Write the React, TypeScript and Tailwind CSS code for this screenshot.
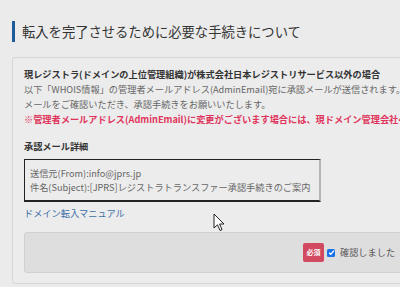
import React from "react";

const jp = { fontFamily: '"Noto Sans CJK JP", "Noto Sans", sans-serif' };

function Cursor() {
  return (
    <svg
      className="absolute left-[213px] top-[213px]"
      width="12"
      height="19"
      viewBox="0 0 12 19"
    >
      <path
        d="M1 1 L1 15 L4.5 11.8 L7 17.5 L9 16.6 L6.6 11 L11 11 Z"
        fill="#fff"
        stroke="#222"
        strokeWidth="1"
        strokeLinejoin="round"
      />
    </svg>
  );
}

export default function App() {
  return (
    <div
      className="relative w-[400px] h-[287px] overflow-hidden bg-[#ebebeb] text-[#555]"
      style={jp}
    >
      {/* Page heading */}
      <div className="mt-[21px] ml-[12px] flex items-center h-[21px] border-l-[3px] border-[#1d5c9b] pl-[7px]">
        <h1 className="text-[13.3px] leading-none text-[#333] whitespace-nowrap">
          転入を完了させるために必要な手続きについて
        </h1>
      </div>

      {/* Card */}
      <div className="mt-[15px] ml-[12px] w-[460px] rounded-[3px] border border-[#d6d6d6] bg-[#ececec] pt-[9px] pb-[10px] px-[11px]">
        <h2 className="text-[9.2px] leading-[15px] font-bold text-[#333] whitespace-nowrap">
          現レジストラ(ドメインの上位管理組織)が株式会社日本レジストリサービス以外の場合
        </h2>
        <div className="text-[9.2px] leading-[15px] text-[#666] whitespace-nowrap">
          <p>以下「WHOIS情報」の管理者メールアドレス(AdminEmail)宛に承認メールが送信されます。</p>
          <p>メールをご確認いただき、承認手続きをお願いいたします。</p>
          <p className="font-bold text-[#e0345c]">
            ※管理者メールアドレス(AdminEmail)に変更がございます場合には、現ドメイン管理会社へご連絡ください。
          </p>
        </div>

        <h3 className="mt-[12px] text-[9.2px] leading-[14px] font-bold text-[#333]">
          承認メール詳細
        </h3>
        <div className="mt-[6px] w-[297px] border-t border-l border-b-2 border-r-2 border-t-[#222] border-l-[#222] border-b-[#222] border-r-[#b5b5b5] bg-[#ececec] px-[5px] py-[6px] text-[9.2px] leading-[14px] text-[#666] whitespace-nowrap">
          <p>送信元(From):info@jprs.jp</p>
          <p>件名(Subject):[JPRS]レジストラトランスファー承認手続きのご案内</p>
        </div>

        <a className="mt-[4px] block text-[9.2px] leading-[14px] text-[#3b6ea6]">
          ドメイン転入マニュアル
        </a>

        <div className="mt-[12px] h-[41px] w-[430px] rounded-[3px] border border-[#d0d0d0] bg-[#dfdedf] flex items-center pl-[278px]">
          <span className="flex items-center justify-center w-[21px] h-[19px] rounded-[2px] bg-[#d24a60] text-white text-[7px] font-bold">
            必須
          </span>
          <span className="ml-[3px] flex items-center justify-center w-[8px] h-[8px] rounded-[1.5px] bg-[#1a73e8]">
            <svg width="7" height="7" viewBox="0 0 8 8">
              <path d="M1.3 4.2 L3.2 6 L6.8 1.8" fill="none" stroke="#fff" strokeWidth="1.5" />
            </svg>
          </span>
          <span className="ml-[5px] text-[9.2px] text-[#555] whitespace-nowrap">確認しました</span>
        </div>
      </div>

      <Cursor />
    </div>
  );
}
